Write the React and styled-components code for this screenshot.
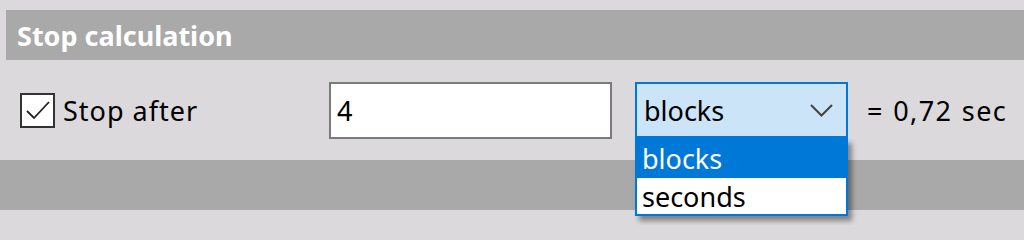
import React, { useState } from "react";
import styled, { createGlobalStyle } from "styled-components";

const GlobalStyle = createGlobalStyle`
  html, body {
    margin: 0;
    padding: 0;
    background: #dbd9dc;
    font-family: "Noto Sans", "Open Sans", sans-serif;
  }
`;

const Page = styled.div`
  padding-top: 10px;
  height: 215px;
  overflow: hidden;
`;

const SectionHeader = styled.div`
  margin-left: 6px;
  height: 50px;
  padding-left: 11px;
  display: flex;
  align-items: center;
  background: #a9a9a9;
  color: #ffffff;
  font-size: 27px;
  font-weight: 700;
`;

const Row = styled.div`
  height: 100px;
  display: grid;
  grid-template-columns: 309px 306px 232px auto;
  align-items: center;
  padding-left: 20px;
`;

const Text = styled.span`
  font-size: 27px;
  color: ${({ $light }) => ($light ? "#fff" : "#000")};
  letter-spacing: ${({ $spacing }) => $spacing || "0"};
  word-spacing: ${({ $words }) => $words || "0"};
  white-space: nowrap;
`;

const CheckLabel = styled.label`
  display: flex;
  align-items: center;
  gap: 8px;
  cursor: pointer;
`;

const Box = styled.span`
  width: 31px;
  height: 31px;
  border: 2px solid #333;
  background: #fff;
  display: flex;
  align-items: center;
  justify-content: center;
`;

const NumberInput = styled.input`
  box-sizing: border-box;
  width: 283px;
  height: 57px;
  border: 2px solid #7a7a7a;
  background: #fff;
  padding: 0 0 0 6px;
  font-family: inherit;
  font-size: 27px;
  color: #000;
  outline: none;
`;

const SelectWrap = styled.div`
  position: relative;
  width: 213px;
`;

const SelectBox = styled.div`
  box-sizing: border-box;
  height: 56px;
  border: 2px solid #0078d7;
  background: #cce4f7;
  display: flex;
  align-items: center;
  justify-content: space-between;
  padding: 0 13px 0 7px;
`;

const Dropdown = styled.ul`
  position: absolute;
  top: 56px;
  left: 0;
  right: 0;
  margin: 0;
  padding: 0;
  list-style: none;
  background: #fff;
  border: 2px solid #0078d7;
  border-top: none;
  box-shadow: 4px 5px 5px rgba(0, 0, 0, 0.4);
`;

const Option = styled.li`
  height: ${({ $active }) => ($active ? "40px" : "36px")};
  display: flex;
  align-items: center;
  padding-left: 5px;
  background: ${({ $active }) => ($active ? "#0078d7" : "#fff")};
`;

const LowerBar = styled.div`
  height: 50px;
  background: #a9a9a9;
`;

const App = () => {
  const [checked, setChecked] = useState(true);
  const [value, setValue] = useState("4");
  const options = ["blocks", "seconds"];

  return (
    <>
      <GlobalStyle />
      <Page>
        <SectionHeader>Stop calculation</SectionHeader>
        <Row>
          <CheckLabel onClick={() => setChecked(!checked)}>
            <Box>
              {checked && (
                <svg width="26" height="22" viewBox="0 0 26 22">
                  <path d="M2 12 L9 19 L24 3" fill="none" stroke="#222" strokeWidth="1.8" />
                </svg>
              )}
            </Box>
            <Text $spacing="1px">Stop after</Text>
          </CheckLabel>
          <NumberInput value={value} onChange={(e) => setValue(e.target.value)} />
          <SelectWrap>
            <SelectBox>
              <Text>blocks</Text>
              <svg width="23" height="13" viewBox="0 0 23 13">
                <path d="M1 1 L11.5 11.5 L22 1" fill="none" stroke="#444" strokeWidth="2" />
              </svg>
            </SelectBox>
            <Dropdown>
              {options.map((o, i) => (
                <Option key={o} $active={i === 0}>
                  <Text $light={i === 0}>{o}</Text>
                </Option>
              ))}
            </Dropdown>
          </SelectWrap>
          <Text $spacing="1.4px" $words="1px">= 0,72 sec</Text>
        </Row>
        <LowerBar />
      </Page>
    </>
  );
};

export default App;
